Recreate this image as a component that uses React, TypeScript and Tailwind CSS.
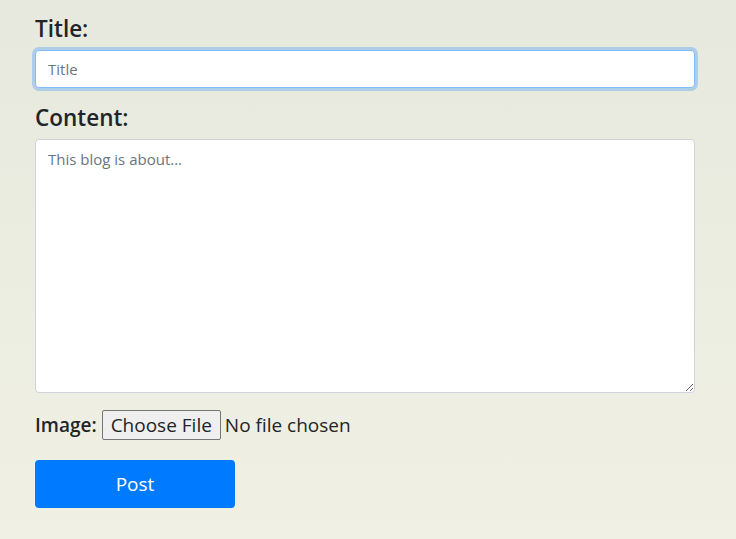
export default function App() {
  return (
    <div
      className="min-h-[539px] w-full bg-gradient-to-b from-[#e8e9de] to-[#f0f1e4] px-[35px] pt-[14px] text-[#212529]"
      style={{ fontFamily: '"Open Sans", "Noto Sans", Arial, sans-serif' }}
    >
      <form className="w-[660px]" onSubmit={(e) => e.preventDefault()}>
        {/* Title */}
        <label className="mb-[6px] block text-[22.5px] font-semibold leading-[30px]">Title:</label>
        <input
          type="text"
          placeholder="Title"
          className="block h-[38px] w-full rounded-[4px] border border-[#80bdff] bg-white px-3 text-[15px] text-[#495057] shadow-[0_0_0_3px_rgba(0,123,255,0.25)] outline-none placeholder:text-[#6c757d]"
        />

        {/* Content */}
        <label className="mb-[6px] mt-[15px] block text-[22.5px] font-semibold leading-[30px]">Content:</label>
        <textarea
          placeholder="This blog is about..."
          className="block h-[254px] w-full rounded-[4px] border border-[#ced4da] bg-white px-3 py-[8px] text-[15px] leading-[22px] text-[#495057] outline-none placeholder:text-[#6c757d]"
        />

        {/* Image */}
        <div className="mt-[17px] flex items-center text-[19px] leading-[30px]">
          <span className="mr-[5px] font-semibold">Image:</span>
          <span className="flex h-[30px] items-center rounded-[2px] border border-[#767676] bg-[#efefef] px-[8px] leading-none">
            Choose File
          </span>
          <span className="ml-[4px]">No file chosen</span>
        </div>

        <button
          type="submit"
          className="mt-[20px] h-[48px] w-[200px] rounded-[4px] bg-[#007bff] text-[19px] text-white"
        >
          Post
        </button>
      </form>
    </div>
  )
}
